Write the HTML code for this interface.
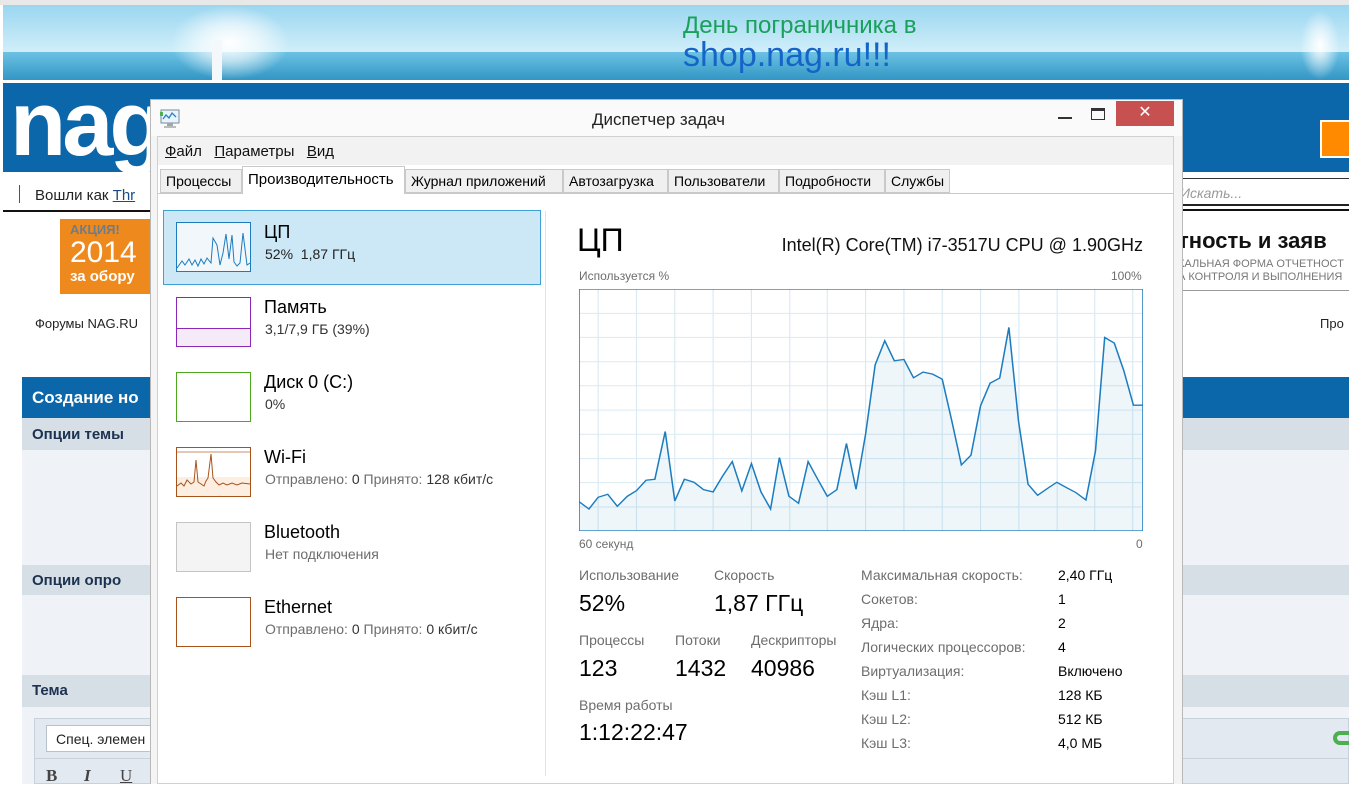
<!DOCTYPE html>
<html><head><meta charset="utf-8"><style>
*{margin:0;padding:0;box-sizing:border-box}
body{width:1349px;height:784px;overflow:hidden;position:relative;background:#fff;font-family:"Liberation Sans","DejaVu Sans",sans-serif}
.a{position:absolute;white-space:nowrap}
.seg{font-family:"Liberation Sans","DejaVu Sans",sans-serif}
.g{color:#6d6d6d}
.tab{position:absolute;top:169px;height:24px;background:#f0f0f0;border:1px solid #c9c9c9;font-size:14px;line-height:22px;padding:0 5px;color:#000;white-space:nowrap}
.thumb{position:absolute;left:176px;width:75px;height:50px;background:#fff}
.it1{position:absolute;left:264px;font-size:18px;color:#000;white-space:nowrap}
.it2{position:absolute;left:265px;font-size:14px;color:#333;white-space:nowrap}
.lab{position:absolute;font-size:14px;color:#6d6d6d;white-space:nowrap}
.val{position:absolute;font-size:23px;color:#000;white-space:nowrap}
.rl{position:absolute;left:861px;font-size:14px;color:#6d6d6d;white-space:nowrap}
.rv{position:absolute;left:1058px;font-size:14px;color:#000;white-space:nowrap}
</style></head><body>
<div class="a" style="left:0;top:0;width:1349px;height:5px;background:#e8e8e8"></div>
<div class="a" style="left:3px;top:5px;width:1346px;height:50px;background:linear-gradient(180deg,#9ad6f0,#d4f0fa)"></div>
<div class="a" style="left:3px;top:52px;width:1346px;height:28px;background:linear-gradient(180deg,#6cc2e4,#3396c4)"></div>
<div class="a" style="left:170px;top:5px;width:120px;height:75px;background:radial-gradient(ellipse at center,#ffffff 0%,rgba(255,255,255,.6) 35%,rgba(255,255,255,0) 70%)"></div>
<div class="a" style="left:212px;top:40px;width:10px;height:40px;background:#f4f8fa"></div>
<div class="a" style="left:1300px;top:10px;width:40px;height:70px;background:radial-gradient(ellipse at center,#fff 0%,rgba(255,255,255,0) 70%)"></div>
<div class="a" style="left:683px;top:12px;font-size:24px;color:#1aa05a">День пограничника в</div>
<div class="a" style="left:683px;top:36px;font-size:34px;color:#1565c8">shop.nag.ru!!!</div>
<div class="a" style="left:3px;top:83px;width:1346px;height:89px;background:#0b66aa"></div>
<div class="a" style="left:10px;top:72px;font-size:92px;font-weight:bold;color:#fff;letter-spacing:-4px">nag</div>
<div class="a" style="left:1320px;top:120px;width:29px;height:38px;background:#ff8a00;border:2px solid #fff;border-right:none"></div>
<div class="a" style="left:19px;top:185px;width:1px;height:18px;background:#0b66aa"></div>
<div class="a" style="left:35px;top:187px;font-size:15px;color:#222">Вошли как <span style="color:#1a4a8a;text-decoration:underline">Thr</span></div>
<div class="a" style="left:3px;top:210px;width:150px;height:2px;background:#111"></div>
<div class="a" style="left:1178px;top:178px;width:171px;height:1px;background:#333"></div>
<div class="a" style="left:1180px;top:185px;font-size:14px;font-style:italic;color:#999">Искать...</div>
<div class="a" style="left:1178px;top:204px;width:171px;height:2px;background:#222"></div>
<div class="a" style="left:1178px;top:209px;width:171px;height:2px;background:#111"></div>
<div class="a" style="left:60px;top:219px;width:92px;height:75px;background:#ee8a1d"></div>
<div class="a" style="left:70px;top:222px;font-size:13px;font-weight:bold;color:#6d7c8c">АКЦИЯ!</div>
<div class="a" style="left:70px;top:236px;font-size:30px;color:#fff">2014</div>
<div class="a" style="left:70px;top:268px;font-size:15px;font-weight:bold;color:#fff">за обору</div>
<div class="a" style="left:1178px;top:228px;font-size:22px;font-weight:bold;color:#111">тность и заяв</div>
<div class="a" style="left:1178px;top:258px;font-size:11px;color:#777">КАЛЬНАЯ ФОРМА ОТЧЕТНОСТ</div>
<div class="a" style="left:1178px;top:271px;font-size:11px;color:#777">А КОНТРОЛЯ И ВЫПОЛНЕНИЯ</div>
<div class="a" style="left:1178px;top:290px;width:171px;height:1px;background:#999"></div>
<div class="a" style="left:35px;top:316px;font-size:13px;color:#222">Форумы NAG.RU</div>
<div class="a" style="left:1320px;top:316px;font-size:13px;color:#222">Про</div>
<div class="a" style="left:22px;top:377px;width:1327px;height:41px;background:#0b66aa"></div>
<div class="a" style="left:32px;top:388px;font-size:17px;font-weight:bold;color:#fff">Создание но</div>
<div class="a" style="left:22px;top:418px;width:1327px;height:32px;background:#d6dee6"></div>
<div class="a" style="left:32px;top:426px;font-size:15px;font-weight:bold;color:#1d3250">Опции темы</div>
<div class="a" style="left:22px;top:450px;width:1327px;height:115px;background:#eff3f7"></div>
<div class="a" style="left:22px;top:565px;width:1327px;height:30px;background:#d6dee6"></div>
<div class="a" style="left:32px;top:572px;font-size:15px;font-weight:bold;color:#1d3250">Опции опро</div>
<div class="a" style="left:22px;top:595px;width:1327px;height:80px;background:#eff3f7"></div>
<div class="a" style="left:22px;top:675px;width:1327px;height:32px;background:#d6dee6"></div>
<div class="a" style="left:32px;top:682px;font-size:15px;font-weight:bold;color:#1d3250">Тема</div>
<div class="a" style="left:22px;top:707px;width:1327px;height:77px;background:#eff3f7"></div>
<div class="a" style="left:34px;top:718px;width:1315px;height:66px;background:#e2e9f1;border:1px solid #c8d2dc"></div>
<div class="a" style="left:46px;top:725px;width:110px;height:27px;background:#fff;border:1px solid #b8c2cc;font-size:14px;padding:5px 9px;color:#222;overflow:hidden">Спец. элемен</div>
<div class="a" style="left:35px;top:758px;width:1314px;height:1px;background:#c8d2dc"></div>
<div class="a" style="left:46px;top:766px;font-size:17px;font-family:'Liberation Serif',serif;font-weight:bold;color:#444">B</div>
<div class="a" style="left:84px;top:766px;font-size:17px;font-family:'Liberation Serif',serif;font-style:italic;font-weight:bold;color:#444">I</div>
<div class="a" style="left:120px;top:766px;font-size:17px;font-family:'Liberation Serif',serif;text-decoration:underline;color:#444">U</div>
<div class="a" style="left:1333px;top:731px;width:16px;height:14px;border:4px solid #4caf50;border-right:none;border-radius:7px 0 0 7px"></div>

<div class="a" style="left:150px;top:99px;width:1033px;height:685px;background:#f4f4f4;border:1px solid #b8b8b8;border-bottom:none"></div>
<div class="a" style="left:151px;top:100px;width:1031px;height:36px;background:#fafafa"></div>
<svg class="a" style="left:159px;top:109px" width="22" height="20" viewBox="0 0 22 20"><rect x="2" y="1" width="18" height="13" fill="#e8f4fb" stroke="#7a8a99"/><polyline points="4,10 7,6 10,9 13,4 17,8" fill="none" stroke="#2a7fc4" stroke-width="1.3"/><rect x="8" y="14" width="6" height="3" fill="#9aa"/><rect x="5" y="17" width="12" height="2" fill="#bbb"/><rect x="1" y="3" width="3" height="4" fill="#4caf50"/></svg>
<div class="a seg" style="left:592px;top:110px;font-size:17px;color:#222">Диспетчер задач</div>
<div class="a" style="left:1058px;top:117px;width:14px;height:2px;background:#333"></div>
<div class="a" style="left:1091px;top:108px;width:14px;height:12px;border:1px solid #333;border-top:3px solid #333"></div>
<div class="a" style="left:1116px;top:101px;width:58px;height:25px;background:#c75050;color:#fff;font-size:16px;text-align:center;line-height:24px">✕</div>
<div class="a" style="left:157px;top:136px;width:1017px;height:648px;background:#fff;border:1px solid #d0d0d0"></div>
<div class="a" style="left:158px;top:137px;width:1015px;height:28px;background:#f2f2f2"></div>
<div class="a seg" style="left:165px;top:143px;font-size:15px;color:#111"><u>Ф</u>айл&nbsp;&nbsp; <u>П</u>араметры&nbsp;&nbsp; <u>В</u>ид</div>
<div class="a" style="left:158px;top:193px;width:1015px;height:1px;background:#c9c9c9"></div>
<div class="tab seg" style="left:160px;width:82px">Процессы</div>
<div class="tab seg" style="left:242px;top:166px;height:28px;width:163px;background:#fff;border-bottom:none;font-size:15px;line-height:26px">Производительность</div>
<div class="tab seg" style="left:405px;width:158px">Журнал приложений</div>
<div class="tab seg" style="left:563px;width:105px">Автозагрузка</div>
<div class="tab seg" style="left:668px;width:111px">Пользователи</div>
<div class="tab seg" style="left:779px;width:106px">Подробности</div>
<div class="tab seg" style="left:885px;width:65px">Службы</div>
<div class="a" style="left:545px;top:211px;width:1px;height:565px;background:#e2e2e2"></div>
<div class="a" style="left:163px;top:210px;width:378px;height:75px;background:#cce8f6;border:1px solid #3fa0d8"></div>
<div class="thumb" style="top:222px;border:1px solid #1c7cbf;background:#f1f7fb">
<svg width="73" height="48" viewBox="0 0 73 48" style="display:block"><polyline points="0,45 5,38 8,42 12,36 15,42 18,37 21,43 24,36 27,41 30,35 34,40 36,15 40,22 43,42 46,30 49,11 52,36 55,12 57,39 60,43 63,40 66,10 70,42 73,40" fill="none" stroke="#1c7cbf" stroke-width="1"/></svg></div>
<div class="it1 seg" style="top:222px">ЦП</div><div class="it2 seg" style="top:246px;color:#222">52%&nbsp; 1,87 ГГц</div>
<div class="thumb" style="top:297px;border:1px solid #8b28b8"><div style="position:absolute;left:0;right:0;top:30px;height:18px;background:#f4eaf8;border-top:1px solid #8b28b8"></div></div>
<div class="it1 seg" style="top:297px">Память</div><div class="it2 seg" style="top:321px">3,1/7,9 ГБ (39%)</div>
<div class="thumb" style="top:372px;border:1px solid #4ea81f"></div>
<div class="it1 seg" style="top:372px">Диск 0 (C:)</div><div class="it2 seg" style="top:396px">0%</div>
<div class="thumb" style="top:447px;border:1px solid #a8521a;background:linear-gradient(180deg,#fff 60%,#fdeee2 60%)">
<svg width="73" height="48" viewBox="0 0 73 48" style="display:block"><line x1="0" y1="4" x2="73" y2="4" stroke="#c8906a"/><polyline points="0,38 4,35 7,38 10,32 14,36 17,34 19,12 21,34 24,36 27,38 29,33 31,30 34,6 36,30 39,34 42,37 46,35 50,37 55,35 60,37 65,35 73,36" fill="none" stroke="#a8521a"/></svg></div>
<div class="it1 seg" style="top:447px">Wi-Fi</div><div class="it2 seg" style="top:471px"><span class="g">Отправлено:</span> 0 <span class="g">Принято:</span> 128 кбит/с</div>
<div class="thumb" style="top:522px;border:1px solid #c4c4c4;background:#f4f4f4"></div>
<div class="it1 seg" style="top:522px">Bluetooth</div><div class="it2 seg g" style="top:546px;color:#6d6d6d">Нет подключения</div>
<div class="thumb" style="top:597px;border:1px solid #a8521a"></div>
<div class="it1 seg" style="top:597px">Ethernet</div><div class="it2 seg" style="top:621px"><span class="g">Отправлено:</span> 0 <span class="g">Принято:</span> 0 кбит/с</div>
<div class="a seg" style="left:577px;top:222px;font-size:32px;color:#000">ЦП</div>
<div class="a seg" style="left:763px;top:235px;font-size:18px;color:#111;width:380px;text-align:right">Intel(R) Core(TM) i7-3517U CPU @ 1.90GHz</div>
<div class="a seg" style="left:579px;top:269px;font-size:12px;color:#6d6d6d">Используется %</div>
<div class="a seg" style="left:1111px;top:269px;font-size:12px;color:#6d6d6d">100%</div>
<svg class="a" style="left:579px;top:289px" width="564" height="242" viewBox="50 85 1472 725" preserveAspectRatio="none">
<rect x="50" y="85" width="1472" height="725" fill="#fff"/>
<g stroke="#d9eaf4" stroke-width="3">
<line x1="100" y1="85" x2="100" y2="810"/><line x1="200" y1="85" x2="200" y2="810"/><line x1="300" y1="85" x2="300" y2="810"/><line x1="400" y1="85" x2="400" y2="810"/><line x1="500" y1="85" x2="500" y2="810"/><line x1="600" y1="85" x2="600" y2="810"/><line x1="698" y1="85" x2="698" y2="810"/><line x1="798" y1="85" x2="798" y2="810"/><line x1="898" y1="85" x2="898" y2="810"/><line x1="998" y1="85" x2="998" y2="810"/><line x1="1098" y1="85" x2="1098" y2="810"/><line x1="1198" y1="85" x2="1198" y2="810"/><line x1="1298" y1="85" x2="1298" y2="810"/><line x1="1396" y1="85" x2="1396" y2="810"/><line x1="1495" y1="85" x2="1495" y2="810"/>
<line x1="50" y1="158" x2="1522" y2="158"/><line x1="50" y1="230" x2="1522" y2="230"/><line x1="50" y1="303" x2="1522" y2="303"/><line x1="50" y1="375" x2="1522" y2="375"/><line x1="50" y1="448" x2="1522" y2="448"/><line x1="50" y1="520" x2="1522" y2="520"/><line x1="50" y1="593" x2="1522" y2="593"/><line x1="50" y1="665" x2="1522" y2="665"/><line x1="50" y1="738" x2="1522" y2="738"/>
</g>
<polygon fill="rgba(17,125,187,0.07)" points="50,810 50,722 76,744 100,709 125,700 150,736 176,706 200,689 225,658 248,655 275,512 300,720 325,655 350,664 375,686 400,693 425,645 450,602 475,690 500,608 525,693 550,744 573,590 598,706 623,727 648,602 673,655 698,706 723,686 748,548 773,685 798,520 823,312 848,240 873,300 898,296 923,351 948,334 973,340 998,355 1023,480 1048,612 1073,583 1098,435 1123,367 1148,352 1172,200 1197,480 1222,670 1247,703 1272,683 1297,664 1322,680 1347,695 1373,717 1398,570 1422,230 1447,247 1472,330 1497,433 1522,433 1522,810"/>
<polyline fill="none" stroke="#1c7cbf" stroke-width="4" points="50,722 76,744 100,709 125,700 150,736 176,706 200,689 225,658 248,655 275,512 300,720 325,655 350,664 375,686 400,693 425,645 450,602 475,690 500,608 525,693 550,744 573,590 598,706 623,727 648,602 673,655 698,706 723,686 748,548 773,685 798,520 823,312 848,240 873,300 898,296 923,351 948,334 973,340 998,355 1023,480 1048,612 1073,583 1098,435 1123,367 1148,352 1172,200 1197,480 1222,670 1247,703 1272,683 1297,664 1322,680 1347,695 1373,717 1398,570 1422,230 1447,247 1472,330 1497,433 1522,433"/>
<rect x="50" y="85" width="1472" height="725" fill="none" stroke="#1c7cbf" stroke-width="4"/>
</svg>
<div class="a seg" style="left:579px;top:537px;font-size:12px;color:#6d6d6d">60 секунд</div>
<div class="a seg" style="left:1136px;top:537px;font-size:12px;color:#6d6d6d">0</div>
<div class="lab seg" style="left:579px;top:567px">Использование</div>
<div class="lab seg" style="left:714px;top:567px">Скорость</div>
<div class="val seg" style="left:579px;top:590px">52%</div>
<div class="val seg" style="left:714px;top:590px">1,87 ГГц</div>
<div class="lab seg" style="left:579px;top:632px">Процессы</div>
<div class="lab seg" style="left:675px;top:632px">Потоки</div>
<div class="lab seg" style="left:751px;top:632px">Дескрипторы</div>
<div class="val seg" style="left:579px;top:655px">123</div>
<div class="val seg" style="left:675px;top:655px">1432</div>
<div class="val seg" style="left:751px;top:655px">40986</div>
<div class="lab seg" style="left:579px;top:697px">Время работы</div>
<div class="val seg" style="left:579px;top:719px">1:12:22:47</div>
<div class="rl seg" style="top:567px">Максимальная скорость:</div><div class="rv seg" style="top:567px">2,40 ГГц</div>
<div class="rl seg" style="top:591px">Сокетов:</div><div class="rv seg" style="top:591px">1</div>
<div class="rl seg" style="top:615px">Ядра:</div><div class="rv seg" style="top:615px">2</div>
<div class="rl seg" style="top:639px">Логических процессоров:</div><div class="rv seg" style="top:639px">4</div>
<div class="rl seg" style="top:663px">Виртуализация:</div><div class="rv seg" style="top:663px">Включено</div>
<div class="rl seg" style="top:687px">Кэш L1:</div><div class="rv seg" style="top:687px">128 КБ</div>
<div class="rl seg" style="top:711px">Кэш L2:</div><div class="rv seg" style="top:711px">512 КБ</div>
<div class="rl seg" style="top:735px">Кэш L3:</div><div class="rv seg" style="top:735px">4,0 МБ</div>
</body></html>
